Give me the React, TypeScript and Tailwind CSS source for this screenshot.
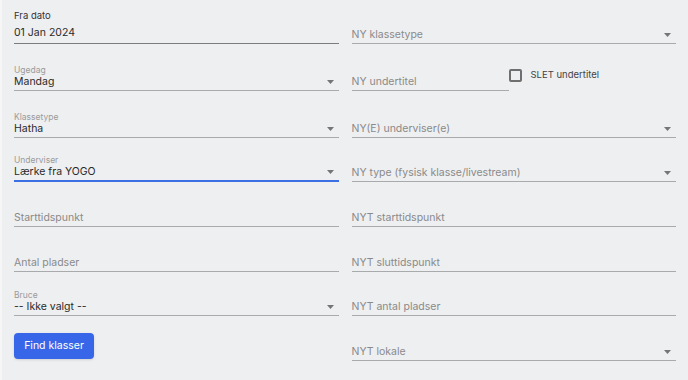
import type { ReactNode } from "react";

const font = { fontFamily: "Inter, 'Noto Sans', sans-serif" };

function Caret() {
  return (
    <svg width="7" height="4" viewBox="0 0 7 4" className="shrink-0">
      <path d="M0 0h7L3.5 4z" fill="#757575" />
    </svg>
  );
}

interface FieldProps {
  label?: string;
  value?: string;
  placeholder?: string;
  select?: boolean;
  focused?: boolean;
}

function Field({ label, value, placeholder, select, focused }: FieldProps) {
  return (
    <div
      className={
        "flex flex-col justify-end h-full " +
        (focused ? "border-b-2 border-[#3b6fe3]" : "border-b border-[#a9aaac]")
      }
    >
      {label && <div className="text-[8.5px] leading-[8px] text-[#9b9b9b]">{label}</div>}
      <div className="flex items-center justify-between h-[16px] pr-[5px]">
        {value ? (
          <span className="text-[10.5px] text-[#2a2a2a]">{value}</span>
        ) : (
          <span className="text-[10.5px] text-[#8a8a8a]">{placeholder}</span>
        )}
        {select && <Caret />}
      </div>
    </div>
  );
}

function Cell({ children }: { children: ReactNode }) {
  return <div className="min-w-0">{children}</div>;
}

export default function App() {
  return (
    <div
      className="w-[688px] h-[380px] bg-[#eeeff1] border-l-2 border-[#f6f6f7] pl-[12px] pr-[12px]"
      style={font}
    >
      <div className="grid grid-cols-2 gap-x-[13px] grid-rows-[44px_47px_47px_44px_45px_45px_44px_45px]">
        {/* row 1 */}
        <Cell>
          <div className="flex flex-col justify-end h-full border-b border-[#7b7c7e]">
            <div className="text-[9.5px] text-[#333] leading-[12px]">Fra dato</div>
            <div className="text-[10.5px] text-[#2a2a2a] mt-[1px] leading-[20px]">01 Jan 2024</div>
          </div>
        </Cell>
        <Cell>
          <Field placeholder="NY klassetype" select />
        </Cell>

        {/* row 2 */}
        <Cell>
          <Field label="Ugedag" value="Mandag" select />
        </Cell>
        <Cell>
          <div className="flex h-full">
            <div className="w-[157px]">
              <Field placeholder="NY undertitel" />
            </div>
            <div className="flex items-center h-[13px] mt-[25px]">
              <div className="w-[13px] h-[13px] border-2 border-[#6f6f6f] rounded-[2px]" />
              <span className="ml-[9px] text-[9.5px] text-[#444]">SLET undertitel</span>
            </div>
          </div>
        </Cell>

        {/* row 3 */}
        <Cell>
          <Field label="Klassetype" value="Hatha" select />
        </Cell>
        <Cell>
          <Field placeholder="NY(E) underviser(e)" select />
        </Cell>

        {/* row 4 */}
        <Cell>
          <Field label="Underviser" value="Lærke fra YOGO" select focused />
        </Cell>
        <Cell>
          <Field placeholder="NY type (fysisk klasse/livestream)" select />
        </Cell>

        {/* row 5 */}
        <Cell>
          <Field placeholder="Starttidspunkt" />
        </Cell>
        <Cell>
          <Field placeholder="NYT starttidspunkt" />
        </Cell>

        {/* row 6 */}
        <Cell>
          <Field placeholder="Antal pladser" />
        </Cell>
        <Cell>
          <Field placeholder="NYT sluttidspunkt" />
        </Cell>

        {/* row 7 */}
        <Cell>
          <Field label="Bruce" value="-- Ikke valgt --" select />
        </Cell>
        <Cell>
          <Field placeholder="NYT antal pladser" />
        </Cell>

        {/* row 8 */}
        <Cell>
          <div className="pt-[15px]">
            <button className="h-[26px] w-[80px] rounded-[4px] bg-[#3866e8] text-white text-[10.5px] shadow-sm">
              Find klasser
            </button>
          </div>
        </Cell>
        <Cell>
          <Field placeholder="NYT lokale" select />
        </Cell>
      </div>
    </div>
  );
}
